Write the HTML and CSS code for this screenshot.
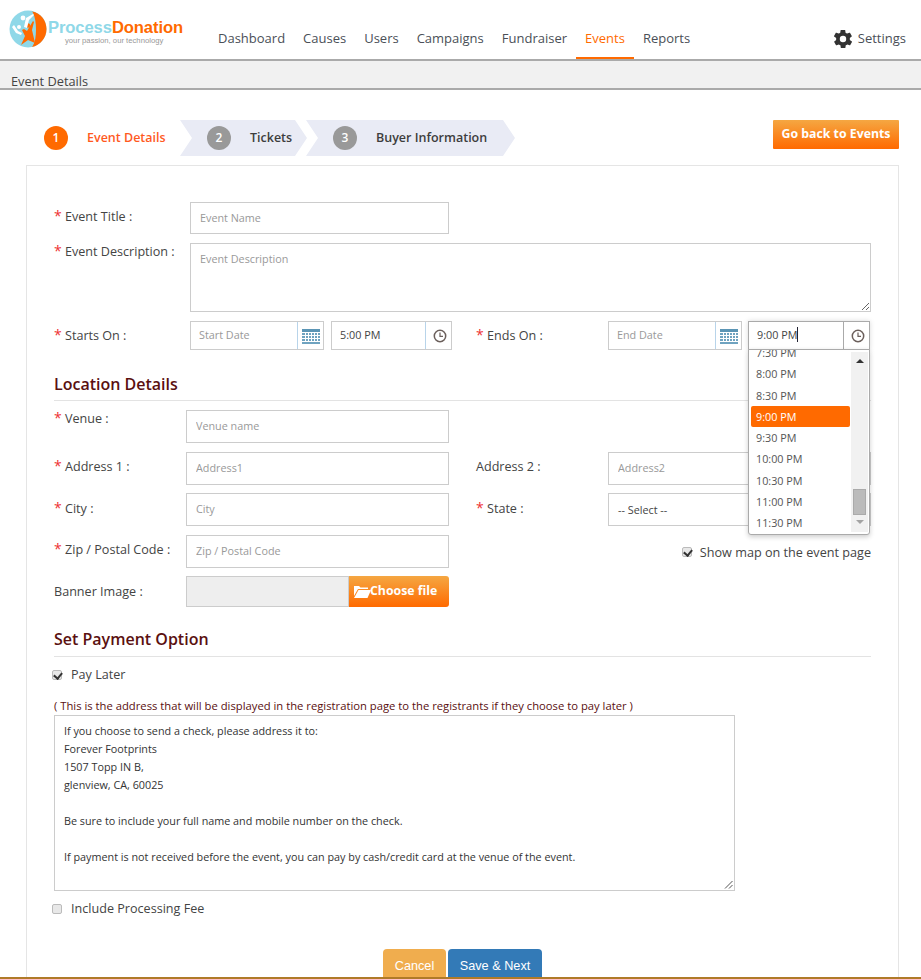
FILE: index.html
```html
<!DOCTYPE html>
<html lang="en">
<head>
<meta charset="utf-8">
<title>Event Details</title>
<link rel="stylesheet" href="styles.css">
</head>
<body>
<div class="page">
  <header class="topbar">
    <div class="logo">
      <svg class="logo-mark" viewBox="0 0 40 38" width="40" height="38">
        <circle cx="20" cy="19" r="18.500" fill="#8fd8e8"/>
        <path d="M24 1.500C33 3 38.500 11 38.500 19C38.500 28 32 35.500 24 37C29 30 31 25 31 19C31 12 28 6 24 1.500Z" fill="#ff6a00"/>
        <path d="M25 3C32 6 36 12 36 20C36 27 31 33 25 36C29 29 29 10 25 3Z" fill="#ff6a00"/>
        <path d="M22 16L25 11L26 12L24 20L27 33L20 30L13 35L17 26L14 20L16 19L19 21Z" fill="#ff6a00"/>
        <circle cx="20" cy="15.500" r="2.200" fill="#ff6a00"/>
        <path d="M16 17L18 8L25 4L26 5L21 10L19 18Z" fill="#fff"/>
        <circle cx="15" cy="8" r="2.400" fill="#fff"/>
        <path d="M6 15L10 21L14 23L13 25L8 23L4 17Z" fill="#fff"/>
        <circle cx="11" cy="17" r="2" fill="#fff"/>
      </svg>
      <div class="logo-text">
        <div class="logo-name"><span class="logo-a">Process</span><span class="logo-b">Donation</span></div>
        <div class="logo-tag">your passion, our technology</div>
      </div>
    </div>
    <nav class="nav">
      <a class="nav-item">Dashboard</a>
      <a class="nav-item">Causes</a>
      <a class="nav-item">Users</a>
      <a class="nav-item">Campaigns</a>
      <a class="nav-item">Fundraiser</a>
      <a class="nav-item nav-active">Events</a>
      <a class="nav-item">Reports</a>
    </nav>
    <div class="settings">
      <svg viewBox="0 0 24 24" width="22" height="22"><path fill="#333" d="M19.400 13c.1-.3.1-.7.1-1s0-.7-.1-1l2.100-1.600c.2-.2.2-.4.1-.6l-2-3.500c-.1-.2-.4-.3-.6-.2l-2.500 1a7.400 7.400 0 0 0-1.700-1l-.4-2.600c0-.3-.2-.4-.5-.4h-4c-.2 0-.4.1-.5.4l-.4 2.600c-.6.3-1.200.6-1.700 1l-2.500-1c-.2-.1-.5 0-.6.2l-2 3.500c-.1.200-.1.500.1.600L4.600 11c-.1.300-.1.700-.1 1s0 .7.1 1l-2.100 1.600c-.2.200-.2.400-.1.600l2 3.500c.1.200.4.300.6.200l2.500-1c.5.400 1.100.8 1.700 1l.4 2.600c0 .3.300.4.500.4h4c.3 0 .5-.1.5-.4l.4-2.600c.6-.2 1.200-.6 1.700-1l2.500 1c.2.100.5 0 .6-.2l2-3.500c.1-.2.1-.4-.1-.6L19.400 13zM12 15.500a3.500 3.500 0 1 1 0-7 3.500 3.500 0 0 1 0 7z"/></svg>
      <span>Settings</span>
    </div>
  </header>
  <div class="subbar"><span>Event Details</span></div>

  <main class="content">
    <div class="steps-row">
      <div class="steps">
        <div class="step step-first"><span class="step-num num-on">1</span><span class="step-label label-on">Event Details</span></div>
        <div class="step step-mid"><span class="step-num">2</span><span class="step-label">Tickets</span></div>
        <div class="step step-last"><span class="step-num">3</span><span class="step-label">Buyer Information</span></div>
      </div>
      <a class="back-btn">Go back to Events</a>
    </div>

    <section class="card">
      <div class="row row-title">
        <label class="lab lab-wide"><i>*</i> Event Title :</label>
        <input class="field w-title" placeholder="Event Name">
      </div>
      <div class="row row-desc">
        <label class="lab lab-wide lab-top"><i>*</i> Event Description :</label>
        <textarea class="field area-desc" placeholder="Event Description"></textarea>
      </div>
      <div class="row row-when">
        <label class="lab lab-wide"><i>*</i> Starts On :</label>
        <div class="group g-date">
          <input class="gfield" placeholder="Start Date">
          <span class="addon"><svg class="cal" viewBox="0 0 18 15" width="18" height="15"><rect width="18" height="3" fill="#5b95b5"/><path d="M0 4h3v2H0zM4 4h2v2H4zM7 4h2v2H7zM10 4h2v2h-2zM13 4h2v2h-2zM16 4h2v2h-2zM0 7h3v2H0zM4 7h2v2H4zM7 7h2v2H7zM10 7h2v2h-2zM13 7h2v2h-2zM16 7h2v2h-2zM0 10h3v2H0zM4 10h2v2H4zM7 10h2v2H7zM10 10h2v2h-2zM13 10h2v2h-2zM16 10h2v2h-2zM0 13h18v2H0z" fill="#6fa3c0"/></svg></span>
        </div>
        <div class="group g-time">
          <input class="gfield val" value="5:00 PM">
          <span class="addon addon-clock"><svg viewBox="0 0 14 14" width="14" height="14"><circle cx="7" cy="7" r="5.700" fill="none" stroke="#6b5f5b" stroke-width="1.500"/><path d="M7 3.500V7.300H10" fill="none" stroke="#6b5f5b" stroke-width="1.200"/></svg></span>
        </div>
        <label class="lab lab-end"><i>*</i> Ends On :</label>
        <div class="group g-date">
          <input class="gfield" placeholder="End Date">
          <span class="addon"><svg class="cal" viewBox="0 0 18 15" width="18" height="15"><rect width="18" height="3" fill="#5b95b5"/><path d="M0 4h3v2H0zM4 4h2v2H4zM7 4h2v2H7zM10 4h2v2h-2zM13 4h2v2h-2zM16 4h2v2h-2zM0 7h3v2H0zM4 7h2v2H4zM7 7h2v2H7zM10 7h2v2h-2zM13 7h2v2h-2zM16 7h2v2h-2zM0 10h3v2H0zM4 10h2v2H4zM7 10h2v2H7zM10 10h2v2h-2zM13 10h2v2h-2zM16 10h2v2h-2zM0 13h18v2H0z" fill="#6fa3c0"/></svg></span>
        </div>
        <div class="timewrap">
          <div class="group g-time2">
            <div class="gfield val caretbox">9:00 PM<b class="caret"></b></div>
            <span class="addon addon-dark addon-clock"><svg viewBox="0 0 14 14" width="14" height="14"><circle cx="7" cy="7" r="5.700" fill="none" stroke="#6b5f5b" stroke-width="1.500"/><path d="M7 3.500V7.300H10" fill="none" stroke="#6b5f5b" stroke-width="1.200"/></svg></span>
          </div>
          <div class="dropdown">
            <ul class="times">
              <li>7:30 PM</li>
              <li>8:00 PM</li>
              <li>8:30 PM</li>
              <li class="sel">9:00 PM</li>
              <li>9:30 PM</li>
              <li>10:00 PM</li>
              <li>10:30 PM</li>
              <li>11:00 PM</li>
              <li>11:30 PM</li>
            </ul>
            <div class="sbar">
              <span class="arr-up"></span>
              <span class="thumb"></span>
              <span class="arr-down"></span>
            </div>
          </div>
        </div>
      </div>

      <h3 class="sec sec-loc">Location Details</h3>
      <div class="row row-venue">
        <label class="lab lab-loc lab-venue"><i>*</i> Venue :</label>
        <input class="field w-loc" placeholder="Venue name">
      </div>
      <div class="row row-addr">
        <label class="lab lab-loc lab-mid"><i>*</i> Address 1 :</label>
        <input class="field w-loc" placeholder="Address1">
        <label class="lab lab-end2 lab-low">Address 2 :</label>
        <input class="field w-right" placeholder="Address2">
      </div>
      <div class="row row-city">
        <label class="lab lab-loc lab-low"><i>*</i> City :</label>
        <input class="field w-loc" placeholder="City">
        <label class="lab lab-end2 lab-low"><i>*</i> State :</label>
        <div class="field w-right selectbox">-- Select --</div>
      </div>
      <div class="row row-zip">
        <label class="lab lab-loc lab-mid"><i>*</i> Zip / Postal Code :</label>
        <input class="field w-loc" placeholder="Zip / Postal Code">
        <label class="mapcheck"><span class="cb cb-on"></span>Show map on the event page</label>
      </div>
      <div class="row row-banner">
        <label class="lab lab-loc lab-plain">Banner Image :</label>
        <div class="filebox"></div>
        <a class="filebtn">
          <svg viewBox="0 0 17 13" width="17" height="13"><path fill="#fff" d="M0 1h5l1.500 1.500H14V4H4L0 11zM4.500 5H17l-3.500 8H0z"/></svg><span class="filetext">Choose file</span>
        </a>
      </div>

      <h3 class="sec sec-pay">Set Payment Option</h3>
      <label class="check check-pay"><span class="cb cb-on"></span>Pay Later</label>
      <p class="note">( This is the address that will be displayed in the registration page to the registrants if they choose to pay later )</p>
      <div class="letter">
        <p>If you choose to send a check, please address it to:<br>Forever Footprints<br>1507 Topp IN B,<br>glenview, CA, 60025</p>
        <p>Be sure to include your full name and mobile number on the check.</p>
        <p>If payment is not received before the event, you can pay by cash/credit card at the venue of the event.</p>
        <svg class="grip" viewBox="0 0 9 9" width="9" height="9"><path d="M8.500 1L1 8.500M8.500 5L5 8.500" stroke="#555" fill="none"/></svg>
      </div>
      <label class="check check-fee"><span class="cb"></span>Include Processing Fee</label>
      <div class="actions">
        <a class="btn btn-cancel">Cancel</a>
        <a class="btn btn-save">Save &amp; Next</a>
      </div>
    </section>
  </main>
  <div class="strip"></div>
</div>
</body>
</html>
```
FILE: styles.css
```css
* { box-sizing: border-box; }
html, body { margin: 0; padding: 0; }
body { font-family: "Open Sans", sans-serif; font-size: 12.600px; color: #444; background: #fff; }
.page { width: 921px; height: 979px; overflow: hidden; display: flex; flex-direction: column; }

.topbar { height: 61px; flex: none; border-bottom: 2px solid #aaa; display: flex; position: relative; }
.logo { width: 218px; padding: 10px 0 0 8px; display: flex; flex: none; }
.logo-mark { flex: none; }
.logo-text { padding-top: 9px; }
.logo-name { font-family: "Liberation Sans", Arial, sans-serif; font-weight: 700; font-size: 16.600px; line-height: 18px; letter-spacing: -.1px; white-space: nowrap; }
.logo-a { color: #8fd8e8; }
.logo-b { color: #ff6a00; }
.logo-tag { font-family: "Liberation Sans", Arial, sans-serif; font-size: 7.700px; line-height: 8px; color: #999; padding-left: 17px; white-space: nowrap; }
.nav { display: flex; flex: none; }
.nav-item { display: block; height: 59px; padding: 29px 9px 0; font-size: 13px; line-height: 18px; color: #4a4f57; border-bottom: 2px solid transparent; }
.nav-item:first-child { padding-left: 0; }
.nav-active { color: #ff6a00; border-bottom-color: #ff6a00; }
.settings { margin-left: auto; padding: 28px 15px 0 0; display: flex; gap: 4px; font-size: 13px; line-height: 20px; color: #4a4f57; }

.subbar { height: 29px; flex: none; background: #f1f1f1; border-bottom: 2px solid #aaa; padding: 12px 0 0 11px; font-size: 12.800px; line-height: 16px; color: #444; }

.content { flex: 1; min-height: 0; overflow: hidden; padding: 0 22px 0 26px; }
.steps-row { display: flex; justify-content: space-between; padding-top: 30px; height: 75px; }
.steps { display: flex; height: 36px; }
.step { display: flex; align-items: center; height: 36px; font-size: 12.500px; font-weight: 600; padding-bottom: 1px; }
.step-first { width: 154px; padding-left: 18px; }
.step-mid { width: 127px; padding-left: 27px; background: #e9ebf5; clip-path: polygon(0 0, 115px 0, 127px 18px, 115px 36px, 0 36px, 12px 18px); }
.step-last { width: 209px; margin-left: -1px; padding-left: 27px; background: #e9ebf5; clip-path: polygon(0 0, 197px 0, 209px 18px, 197px 36px, 0 36px, 12px 18px); }
.step-num { width: 24px; height: 24px; border-radius: 50%; background: #999; color: #fff; font-size: 12px; line-height: 24px; text-align: center; flex: none; }
.num-on { background: #ff6a00; }
.step-label { margin-left: 19px; color: #3d3d3d; white-space: nowrap; }
.label-on { color: #ff5a1f; }
.back-btn { width: 126px; height: 29px; border-radius: 1px; background: linear-gradient(#f5a742, #ff6a00); color: #fff; font-size: 12.300px; font-weight: 700; line-height: 27px; text-align: center; }

.card { border: 1px solid #e5e5e5; height: 820px; padding: 36px 27px 0; position: relative; }
.row { display: flex; align-items: flex-start; }
.lab { flex: none; font-size: 12.600px; line-height: 18px; color: #444; white-space: nowrap; }
.lab i { font-style: normal; color: #e33; font-size: 14px; }
.lab-wide { width: 136px; padding-top: 5px; }
.lab-top { padding-top: 0; margin-top: -1px; }
.field { display: block; border: 1px solid #ccc; background: #fff; font: 10.800px "Open Sans", sans-serif; color: #444; padding: 0 9px 2px; outline: 0; border-radius: 0; }
::placeholder { color: #999; opacity: 1; }
.w-title { width: 259px; height: 32px; }
.row-desc { margin-top: 9px; }
.area-desc { width: 681px; height: 69px; padding-top: 7px; resize: both; }
.row-when { margin-top: 9px; height: 29px; position: relative; z-index: 2; }
.group { height: 29px; display: flex; border: 1px solid #ccc; flex: none; background: #fff; }
.g-date { width: 134px; }
.g-time { width: 121px; margin-left: 7px; }
.g-time2 { width: 122px; border-color: #aaa; box-shadow: 0 0 5px rgba(0, 0, 0, .15); }
.gfield { width: 0; flex: 1; border: 0; outline: 0; padding: 0 8px 1px; font: 10.800px/26px "Open Sans", sans-serif; color: #999; background: transparent; min-width: 0; }
.val { color: #444; }
.caretbox { white-space: nowrap; }
.caret { display: inline-block; width: 1px; height: 15px; background: #223; vertical-align: -3px; }
.addon { width: 26px; flex: none; border-left: 1px solid #b8d4ea; display: flex; align-items: center; justify-content: center; padding-top: 1px; }
.addon-clock { padding-left: 2px; }
.addon-dark { border-left-color: #aaa; }
.lab-end { width: 132px; margin-left: 24px; padding-top: 5px; }
.timewrap { margin-left: 6px; position: relative; }
.dropdown { position: absolute; left: 0; top: 28px; width: 122px; height: 186px; background: #fff; border: 1px solid #aaa; border-radius: 0 0 3px 3px; box-shadow: 0 2px 5px rgba(0, 0, 0, .2); overflow: hidden; }
.times { list-style: none; margin: 0; padding: 0 0 0 2px; position: relative; top: -8px; width: 101px; }
.times li { height: 21.300px; line-height: 21px; font-size: 10.800px; color: #555; padding-left: 5px; }
.times .sel { background: #ff6a00; color: #fff; border-radius: 2px; }
.sbar { position: absolute; right: 1px; top: 2px; bottom: 2px; width: 17px; background: #f1f1f1; }
.arr-up { position: absolute; left: 5px; top: 7px; border: 4px solid transparent; border-top: 0; border-bottom: 4px solid #333; }
.arr-down { position: absolute; left: 5px; bottom: 8px; border: 4px solid transparent; border-bottom: 0; border-top: 4px solid #a3a3a3; }
.thumb { position: absolute; left: 2px; right: 2px; top: 137px; height: 26px; background: #bbb; border: 1px solid #aaa; }

.sec { margin: 0; font-size: 16px; font-weight: 600; line-height: 20px; color: #5a1010; border-bottom: 1px solid #e3e3e3; }
.sec-loc { margin-top: 24px; height: 27px; }
.sec-pay { margin-top: 22px; height: 27px; line-height: 18px; }
.lab-loc { width: 132px; }
.lab-venue { margin-top: -1px; }
.lab-mid { padding-top: 5px; }
.lab-low { padding-top: 6px; }
.lab-plain { padding-top: 7px; }
.w-loc { width: 263px; height: 33px; }
.w-right { width: 263px; height: 33px; }
.row-venue { margin-top: 9px; }
.row-addr { margin-top: 9px; }
.row-city { margin-top: 8px; }
.row-zip { margin-top: 9px; position: relative; }
.lab-end2 { width: 132px; margin-left: 27px; }
.selectbox { line-height: 31px; padding: 0 9px; }
.mapcheck { position: absolute; right: 0; top: 8px; display: flex; align-items: center; font-size: 12.650px; line-height: 18px; color: #444; }
.cb { width: 10px; height: 10px; border: 1px solid #bbb; border-radius: 2px; background: #e8e8e8; margin-right: 8px; position: relative; flex: none; }
.cb-on::after { content: ""; position: absolute; left: 2px; top: 0; width: 4px; height: 6px; border: solid #333; border-width: 0 2px 2px 0; transform: rotate(40deg); }
.row-banner { margin-top: 8px; height: 32px; }
.filebox { width: 163px; height: 31px; background: #eee; border: 1px solid #ccc; }
.filebtn { width: 100px; height: 31px; background: linear-gradient(#f5a742, #ff6a00); color: #fff; font-size: 12.300px; font-weight: 700; line-height: 30px; border-radius: 0 3px 3px 0; display: flex; align-items: flex-start; padding-left: 5px; }
.filebtn svg { margin-top: 9px; flex: none; }
.filetext { margin-left: -1px; }
.check { display: flex; align-items: center; font-size: 12.600px; line-height: 18px; color: #444; }
.check-pay { margin-top: 9px; margin-left: -2px; }
.check-pay .cb { margin-right: 9px; }
.note { margin: 15px 0 0; font-size: 11.250px; line-height: 14px; color: #5a1010; white-space: nowrap; }
.letter { margin-top: 2px; width: 681px; height: 176px; border: 1px solid #ccc; padding: 6px 9px; font-size: 10.800px; line-height: 18px; color: #333; position: relative; }
.letter p { margin: 0 0 18px; }
.grip { position: absolute; right: 1px; bottom: 1px; }
.check-fee { margin-top: 9px; margin-left: -2px; }
.check-fee .cb { margin-right: 9px; }
.actions { display: flex; justify-content: center; gap: 2px; margin-top: 31px; }
.btn { height: 34px; border-radius: 4px; color: #fff; font-family: "Liberation Sans", Arial, sans-serif; font-size: 12.700px; line-height: 34px; text-align: center; }
.btn-cancel { width: 63px; background: #f0ad4e; }
.btn-save { width: 94px; background: #337ab7; }
.strip { height: 2px; flex: none; background: #b07a28; }
```
